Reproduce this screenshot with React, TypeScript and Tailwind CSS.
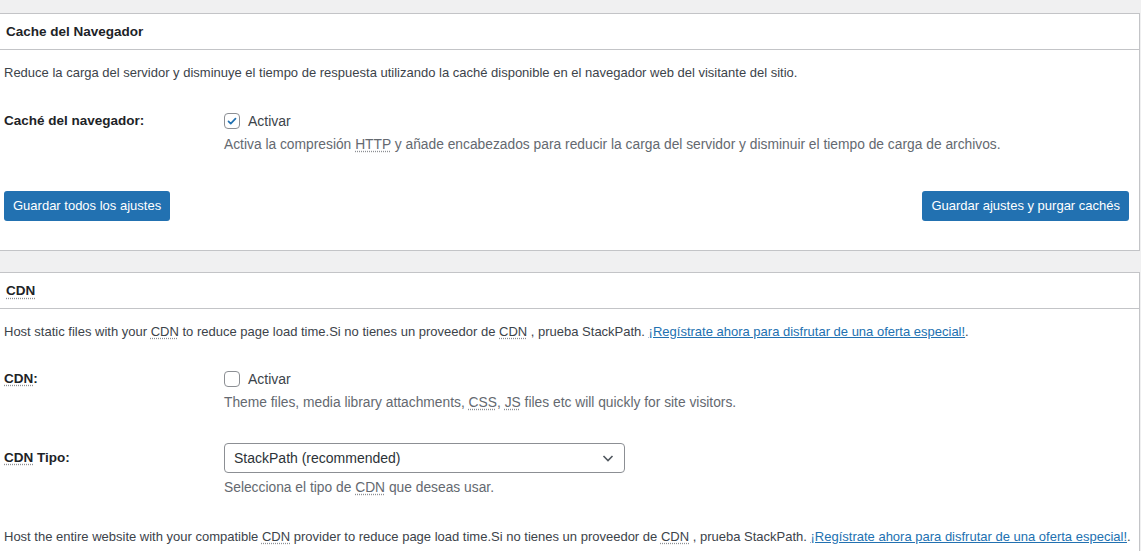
import type { ReactNode } from "react";

const font = { fontFamily: '"Liberation Sans", Arial, sans-serif' };

function Abbr({ children }: { children: ReactNode }) {
  return (
    <abbr className="underline decoration-dotted decoration-[#8c8f94] underline-offset-2">
      {children}
    </abbr>
  );
}

function Checkbox({ checked }: { checked?: boolean }) {
  return (
    <span className="flex h-4 w-4 shrink-0 items-center justify-center rounded-[4px] border border-[#8c8f94] bg-white">
      {checked && (
        <svg viewBox="0 0 20 20" className="h-[18px] w-[18px]">
          <path
            d="M5 10.5l3.2 3.2L15 6.5"
            fill="none"
            stroke="#2271b1"
            strokeWidth="2.4"
            strokeLinecap="round"
            strokeLinejoin="round"
          />
        </svg>
      )}
    </span>
  );
}

function Button({ children }: { children: ReactNode }) {
  return (
    <button className="h-[30px] rounded-[3px] bg-[#2271b1] px-[9px] text-[13px] text-white">
      {children}
    </button>
  );
}

function Panel({ title, children }: { title: ReactNode; children: ReactNode }) {
  return (
    <section className="w-[1140px] border-y border-r border-[#c3c4c7] bg-white">
      <h3 className="flex h-[36px] items-center border-b border-[#c3c4c7] pt-[2px] pl-[6px] text-[13.5px] font-semibold text-[#1d2327]">
        {title}
      </h3>
      {children}
    </section>
  );
}

function Row({
  label,
  children,
  help,
}: {
  label: ReactNode;
  children: ReactNode;
  help: ReactNode;
}) {
  return (
    <div className="flex pl-[4px]">
      <div className="w-[220px] shrink-0 text-[13.5px] font-bold leading-5 text-[#1d2327]">
        {label}
      </div>
      <div>
        {children}
        <p className="text-[13.8px] leading-5 text-[#646970]">{help}</p>
      </div>
    </div>
  );
}

export default function App() {
  return (
    <div style={font} className="min-h-[551px] bg-[#f0f0f1] pt-[13px] text-[#3c434a]">
      <Panel title="Cache del Navegador">
        <div className="pt-[13px] pb-[29px]">
          <p className="pl-[4px] text-[13px] leading-5">
            Reduce la carga del servidor y disminuye el tiempo de respuesta utilizando la caché
            disponible en el navegador web del visitante del sitio.
          </p>
          <div className="mt-[28px]">
            <Row
              label="Caché del navegador:"
              help={
                <>
                  Activa la compresión <Abbr>HTTP</Abbr> y añade encabezados para reducir la carga
                  del servidor y disminuir el tiempo de carga de archivos.
                </>
              }
            >
              <label className="mb-[4px] flex h-5 items-center gap-[8px] text-[14px] text-[#3c434a]">
                <Checkbox checked />
                Activar
              </label>
            </Row>
          </div>
          <div className="mt-[36px] flex justify-between pl-[4px] pr-[10px]">
            <Button>Guardar todos los ajustes</Button>
            <Button>Guardar ajustes y purgar cachés</Button>
          </div>
        </div>
      </Panel>

      <div className="h-[21px]" />

      <Panel title={<Abbr>CDN</Abbr>}>
        <div className="pt-[13px] pb-6">
          <p className="pl-[4px] text-[13px] leading-5">
            Host static files with your <Abbr>CDN</Abbr> to reduce page load time.Si no tienes un
            proveedor de <Abbr>CDN</Abbr> , prueba StackPath.{" "}
            <a href="#" className="text-[#2271b1] underline">
              ¡Regístrate ahora para disfrutar de una oferta especial!
            </a>
            .
          </p>
          <div className="mt-[27px]">
            <Row
              label={
                <>
                  <Abbr>CDN</Abbr>:
                </>
              }
              help={
                <>
                  Theme files, media library attachments, <Abbr>CSS</Abbr>, <Abbr>JS</Abbr> files
                  etc will quickly for site visitors.
                </>
              }
            >
              <label className="mb-[4px] flex h-5 items-center gap-[8px] text-[14px] text-[#3c434a]">
                <Checkbox />
                Activar
              </label>
            </Row>
          </div>
          <div className="mt-[30px]">
            <div className="flex pl-[4px]">
              <div className="flex h-[30px] w-[220px] shrink-0 items-center text-[13.5px] font-bold text-[#1d2327]">
                <span>
                  <Abbr>CDN</Abbr> Tipo:
                </span>
              </div>
              <div>
                <div className="flex h-[30px] w-[401px] items-center justify-between rounded-[4px] border border-[#8c8f94] bg-white pl-[9px] pr-[8px] text-[14px] text-[#2c3338]">
                  <span>StackPath (recommended)</span>
                  <svg viewBox="0 0 16 16" className="h-4 w-4">
                    <path
                      d="M3.5 6l4.5 4.5L12.5 6"
                      fill="none"
                      stroke="#50575e"
                      strokeWidth="1.6"
                    />
                  </svg>
                </div>
                <p className="mt-[5px] text-[13.8px] leading-5 text-[#646970]">
                  Selecciona el tipo de <Abbr>CDN</Abbr> que deseas usar.
                </p>
              </div>
            </div>
          </div>
          <p className="mt-[29px] pl-[4px] text-[13px] leading-5">
            Host the entire website with your compatible <Abbr>CDN</Abbr> provider to reduce page
            load time.Si no tienes un proveedor de <Abbr>CDN</Abbr> , prueba StackPath.{" "}
            <a href="#" className="text-[#2271b1] underline">
              ¡Regístrate ahora para disfrutar de una oferta especial!
            </a>
            .
          </p>
        </div>
      </Panel>
    </div>
  );
}
